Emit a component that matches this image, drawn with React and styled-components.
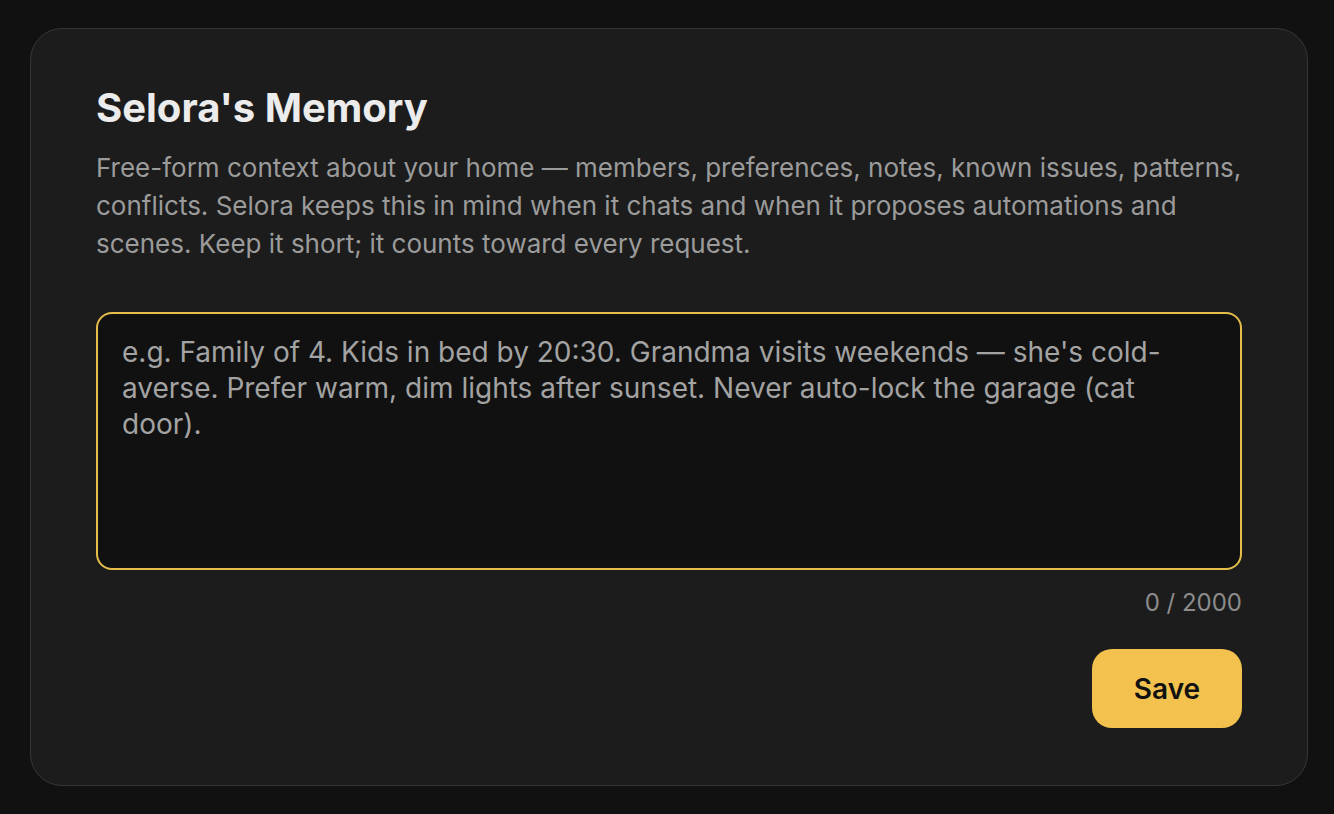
import React, { useState } from "react";
import styled, { createGlobalStyle } from "styled-components";

const GlobalStyle = createGlobalStyle`
  * { box-sizing: border-box; }
  html, body {
    margin: 0;
    background: #111111;
    font-family: Inter, "Noto Sans", sans-serif;
  }
`;

const Page = styled.div`
  padding: 28px 26px 28px 30px;
  min-height: 814px;
`;

const Card = styled.section`
  background: #1c1c1c;
  border: 1px solid #363636;
  border-radius: 32px;
  padding: 55px 65px 57px 65px;
  display: flex;
  flex-direction: column;
  height: 758px;
`;

const Title = styled.h2`
  margin: 0;
  font-size: 40px;
  font-weight: 700;
  color: #ececec;
  line-height: 48px;
`;

const Description = styled.p`
  margin: 17px 0 0;
  font-size: 26px;
  line-height: 38px;
  color: #9b9b9b;
`;

const MemoryInput = styled.textarea`
  margin-top: 49px;
  height: 258px;
  width: 100%;
  resize: none;
  background: #111111;
  border: 2px solid #e4bd4c;
  border-radius: 16px;
  padding: 20px 40px 20px 24px;
  font-family: inherit;
  font-size: 28px;
  line-height: 36px;
  color: #e0e0e0;
  outline: none;
  &::placeholder {
    color: #a3a3a3;
  }
`;

const Counter = styled.div`
  margin-top: 19px;
  text-align: right;
  font-size: 24px;
  line-height: 28px;
  color: #8c8c8c;
`;

const Actions = styled.div`
  margin-top: 32px;
  display: flex;
  justify-content: flex-end;
`;

const SaveButton = styled.button`
  width: 150px;
  height: 79px;
  border: none;
  border-radius: 20px;
  background: #f2c14e;
  color: #111111;
  font-family: inherit;
  font-size: 28px;
  font-weight: 600;
  cursor: pointer;
`;

const LIMIT = 2000;

export default function App() {
  const [text, setText] = useState("");
  return (
    <>
      <GlobalStyle />
      <Page>
        <Card>
          <Title>Selora's Memory</Title>
          <Description>
            Free-form context about your home — members, preferences, notes,
            known issues, patterns, conflicts. Selora keeps this in mind when it
            chats and when it proposes automations and scenes. Keep it short; it
            counts toward every request.
          </Description>
          <MemoryInput
            value={text}
            maxLength={LIMIT}
            onChange={(e) => setText(e.target.value)}
            placeholder="e.g. Family of 4. Kids in bed by 20:30. Grandma visits weekends — she's cold-averse. Prefer warm, dim lights after sunset. Never auto-lock the garage (cat door)."
          />
          <Counter>
            {text.length} / {LIMIT}
          </Counter>
          <Actions>
            <SaveButton>Save</SaveButton>
          </Actions>
        </Card>
      </Page>
    </>
  );
}
